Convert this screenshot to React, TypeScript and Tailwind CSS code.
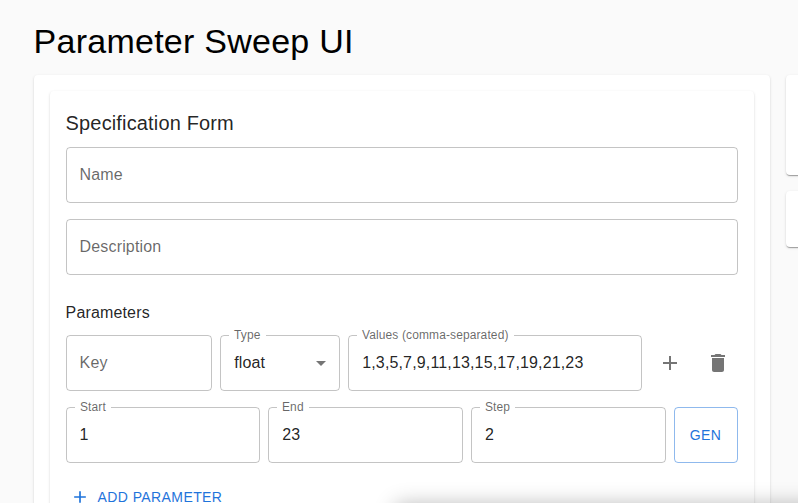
import { ReactNode } from "react";

const paper =
  "rounded bg-white shadow-[0_2px_1px_-1px_rgba(0,0,0,0.2),0_1px_1px_0_rgba(0,0,0,0.14),0_1px_3px_0_rgba(0,0,0,0.12)]";

function Field({
  label,
  value,
  className,
  children,
}: {
  label: string;
  value?: string;
  className: string;
  children?: ReactNode;
}) {
  const filled = value !== undefined;
  return (
    <div className={`relative flex h-14 min-w-0 items-center px-3.5 ${className}`}>
      <fieldset className="pointer-events-none absolute inset-x-0 -top-[5px] bottom-0 rounded border border-black/23 px-2">
        {filled && (
          <legend className="invisible block h-[11px] text-xs leading-[11px] tracking-[0.00938em]">
            <span className="px-[5px]">{label}</span>
          </legend>
        )}
        {!filled && <legend className="h-[11px] w-0" />}
      </fieldset>
      {filled ? (
        <>
          <label className="absolute left-0 top-0 origin-top-left translate-x-[14px] -translate-y-[9px] scale-75 whitespace-nowrap text-base leading-[23px] tracking-[0.00938em] text-black/60">
            {label}
          </label>
          <span className="flex-1 pb-px leading-[23px] tracking-[0.00938em]">{value}</span>
        </>
      ) : (
        <label className="pb-px leading-[23px] tracking-[0.00938em] text-black/60">{label}</label>
      )}
      {children}
    </div>
  );
}

function AddIcon({ className }: { className: string }) {
  return (
    <svg viewBox="0 0 24 24" fill="currentColor" className={className}>
      <path d="M19 13h-6v6h-2v-6H5v-2h6V5h2v6h6z" />
    </svg>
  );
}

export default function App() {
  return (
    <div className="relative h-[503px] w-[798px] overflow-hidden bg-[#fafafa] pl-[33.6px] pt-5 font-['Liberation_Sans',Arial,sans-serif] text-base text-black/87">
      <h1 className="mb-[13px] text-[34px] leading-[42px] tracking-[0.00735em] text-black">
        Parameter Sweep UI
      </h1>
      <div className="flex items-start gap-4">
        <main className={`w-[736px] shrink-0 p-4 ${paper}`}>
          <section className={`h-[500px] p-4 ${paper}`}>
            <h2 className="mb-2 text-xl leading-8 tracking-[0.0075em]">Specification Form</h2>
            <div className="flex flex-col gap-4">
              <Field label="Name" className="w-full" />
              <Field label="Description" className="w-full" />
            </div>
            <h3 className="mb-2 mt-6 text-base leading-7 tracking-[0.00938em]">Parameters</h3>
            <div className="mb-4 flex items-center gap-2">
              <Field label="Key" className="w-[146.6px]" />
              <Field label="Type" value="float" className="w-[120px]">
                <svg viewBox="0 0 24 24" fill="currentColor" className="-mr-[7px] size-6 text-black/54">
                  <path d="M7 10l5 5 5-5z" />
                </svg>
              </Field>
              <Field label="Values (comma-separated)" value="1,3,5,7,9,11,13,15,17,19,21,23" className="flex-1" />
              <button className="p-2 text-black/54">
                <AddIcon className="size-6" />
              </button>
              <button className="p-2 text-black/54">
                <svg viewBox="0 0 24 24" fill="currentColor" className="size-6">
                  <path d="M6 19c0 1.1.9 2 2 2h8c1.1 0 2-.9 2-2V7H6zM19 4h-3.500l-1-1h-5l-1 1H5v2h14z" />
                </svg>
              </button>
            </div>
            <div className="mb-4 flex gap-2">
              <Field label="Start" value="1" className="flex-1" />
              <Field label="End" value="23" className="flex-1" />
              <Field label="Step" value="2" className="flex-1" />
              <button className="w-16 rounded border border-[#1f74db]/50 text-sm tracking-[0.02857em] text-[#1f74db]">
                GEN
              </button>
            </div>
            <button className="flex items-center px-1.5 py-1.5 text-sm leading-[24.5px] tracking-[0.02857em] text-[#1f74db]">
              <AddIcon className="-ml-0.5 mr-2 size-5" />
              ADD PARAMETER
            </button>
          </section>
        </main>
        <aside className="flex w-[300px] shrink-0 flex-col gap-4">
          <div className={`h-[100px] ${paper}`} />
          <div className={`h-14 ${paper}`} />
        </aside>
      </div>
      <div className="absolute left-[398px] top-[507px] h-40 w-[500px] shadow-[0_0_20px_2px_rgba(0,0,0,0.3)]" />
    </div>
  );
}
